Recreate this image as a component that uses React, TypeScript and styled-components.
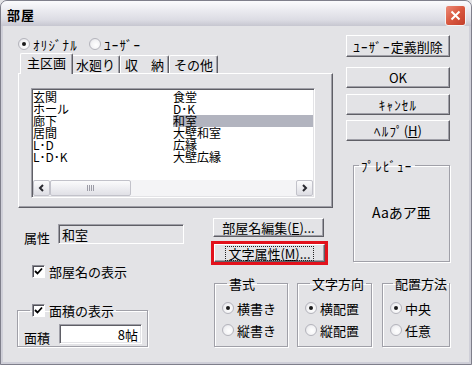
import styled, {createGlobalStyle} from "styled-components";

const GlobalStyle = createGlobalStyle`
    html, body {
        margin: 0;
        padding: 0;
        background: #e3e3e6;
    }
    body {
        font-family: "Noto Sans CJK JP", "DejaVu Sans", sans-serif;
        font-size: 13px;
        color: #000;
    }
`;

const FACE = "#e3e3e6";

const Window = styled.div`
    width: 472px;
    height: 365px;
    box-sizing: border-box;
    border: 1px solid #7f7f8b;
    border-radius: 7px 7px 0 0;
    background: #cfcfd8;
    display: flex;
    flex-direction: column;
    overflow: hidden;
`;

const TitleBar = styled.div`
    height: 25px;
    flex: none;
    display: flex;
    align-items: flex-start;
    justify-content: space-between;
    padding: 0 5px 0 6px;
    background: linear-gradient(#fbfbfd 0%, #ececf1 35%, #dcdce4 75%, #c6c6d0 100%);
`;

const Title = styled.span`
    font-weight: bold;
    font-size: 13px;
    line-height: 13px;
    margin-top: 7px;
    letter-spacing: 1px;
`;

const CloseButton = styled.div`
    width: 21px;
    height: 21px;
    margin-top: 4px;
    box-sizing: border-box;
    border: 1px solid #f4f4f4;
    border-radius: 3px;
    background: linear-gradient(135deg, #ec8a78 0%, #d9583f 50%, #c23e2a 100%);
    display: flex;
    align-items: center;
    justify-content: center;
`;

const Client = styled.div`
    flex: 1;
    margin: 0 2px 2px;
    background: ${FACE};
    box-sizing: border-box;
    padding: 9px 0 0 15px;
    display: grid;
    grid-template-columns: 192px 136px 104px;
    grid-template-rows: 173px 57px 82px;
`;

// half-width katakana run wider in the original UI font
const Kana = styled.span`
    letter-spacing: 1.2px;
`;

/* ---- radio / checkbox ---- */

const RadioLabel = styled.label`
    display: inline-flex;
    align-items: center;
    gap: 3px;
    height: 16px;
    line-height: 13px;
    white-space: nowrap;
`;

const RadioDot = styled.span<{ $checked?: boolean }>`
    width: 12px;
    height: 12px;
    box-sizing: border-box;
    border-radius: 50%;
    border: 1px solid #b4b4bc;
    background: radial-gradient(circle at 60% 60%, #ffffff 0%, #f2f2f4 55%, #d6d6dc 100%);
    display: flex;
    align-items: center;
    justify-content: center;

    &::after {
        content: "";
        width: 4px;
        height: 4px;
        border-radius: 50%;
        background: ${p => (p.$checked ? "#1a1a1a" : "transparent")};
    }
`;

const CheckBox = styled.span`
    width: 13px;
    height: 13px;
    box-sizing: border-box;
    border: 1px solid;
    border-color: #8c8c94 #ffffff #ffffff #8c8c94;
    box-shadow: inset 1px 1px 0 #505058;
    background: #fff;
    display: flex;
    align-items: center;
    justify-content: center;
`;

const CheckLabel = styled.label`
    display: inline-flex;
    align-items: center;
    gap: 4px;
    line-height: 13px;
    white-space: nowrap;
`;

const Check = () => (
    <CheckBox>
        <svg width="9" height="9" viewBox="0 0 9 9">
            <path d="M1 4 L3.5 6.5 L8 1.5" fill="none" stroke="#000" strokeWidth="1.8"/>
        </svg>
    </CheckBox>
);

const Radio = ({label, checked}: { label: React.ReactNode, checked?: boolean }) => (
    <RadioLabel>
        <RadioDot $checked={checked}/>
        <span>{label}</span>
    </RadioLabel>
);

/* ---- tabs & list ---- */

const TabArea = styled.div`
    grid-column: 1 / 3;
    grid-row: 1;
    display: flex;
    flex-direction: column;
`;

const ModeRow = styled.div`
    height: 18px;
    display: flex;
    align-items: center;
    gap: 11px;
`;

const TabStrip = styled.div`
    height: 20px;
    display: flex;
    align-items: flex-end;
    padding-left: 4px;
`;

const Tab = styled.div<{ $active?: boolean }>`
    position: relative;
    z-index: ${p => (p.$active ? 1 : 0)};
    height: ${p => (p.$active ? 21 : 18)}px;
    margin: 0 ${p => (p.$active ? -2 : 0)}px ${p => (p.$active ? -1 : 0)}px;
    padding: 0 ${p => (p.$active ? 6 : 4)}px;
    box-sizing: border-box;
    background: ${FACE};
    border: 1px solid;
    border-color: #ffffff #5f5f66 transparent #ffffff;
    border-bottom: none;
    border-radius: 2px 2px 0 0;
    box-shadow: inset -1px 0 0 #a0a0a8;
    font-size: 13px;
    line-height: ${p => (p.$active ? 18 : 17)}px;
    white-space: pre;
`;

const TabPanel = styled.div`
    width: 315px;
    height: 135px;
    box-sizing: border-box;
    border: 1px solid;
    border-color: #ffffff #5f5f66 #5f5f66 #ffffff;
    box-shadow: inset -1px -1px 0 #a0a0a8;
    padding: 14px 0 0 12px;
`;

const ListBox = styled.div`
    width: 284px;
    height: 110px;
    box-sizing: border-box;
    border: 1px solid;
    border-color: #a0a0a8 #ffffff #ffffff #a0a0a8;
    box-shadow: inset 1px 1px 0 #5f5f66, inset -1px -1px 0 ${FACE};
    background: #fff;
    padding: 1px;
    display: flex;
    flex-direction: column;
`;

const ListItems = styled.div`
    flex: 1;
    padding-top: 1px;
    display: grid;
    grid-auto-flow: column;
    grid-template-rows: repeat(6, 12px);
    grid-auto-columns: 140px;
`;

const ListItem = styled.div<{ $selected?: boolean }>`
    font-size: 12px;
    line-height: 12px;
    height: 12px;
    background: ${p => (p.$selected ? "#b2b4bf" : "transparent")};
    white-space: nowrap;
`;

const ScrollBar = styled.div`
    height: 16px;
    display: flex;
    background: #f4f4f6;
`;

const ScrollButton = styled.div`
    width: 17px;
    height: 16px;
    box-sizing: border-box;
    border: 1px solid #c2c2ca;
    border-radius: 2px;
    background: linear-gradient(#fbfbfc, #dedee4);
    display: flex;
    align-items: center;
    justify-content: center;
`;

const ScrollTrack = styled.div`
    flex: 1;
    display: flex;
`;

const ScrollThumb = styled.div`
    width: 81px;
    height: 16px;
    box-sizing: border-box;
    border: 1px solid #c2c2ca;
    border-radius: 2px;
    background: linear-gradient(#fbfbfc, #e0e0e6);
    display: flex;
    align-items: center;
    justify-content: center;
    gap: 1px;
`;

const Grip = styled.span`
    width: 1px;
    height: 6px;
    background: #9c9ca6;
`;

const Arrow = ({dir}: { dir: "left" | "right" }) => (
    <svg width="7" height="8" viewBox="0 0 7 8">
        <path
            d={dir === "left" ? "M5 1 L2 4 L5 7" : "M2 1 L5 4 L2 7"}
            fill="none"
            stroke="#2a2a30"
            strokeWidth="2"
        />
    </svg>
);

/* ---- buttons ---- */

const SideColumn = styled.div`
    grid-column: 3;
    grid-row: 1 / 3;
    display: flex;
    flex-direction: column;
`;

const Button = styled.button<{ $top?: number, $height?: number }>`
    display: block;
    width: 100%;
    height: ${p => p.$height ?? 21}px;
    margin: ${p => p.$top ?? 0}px 0 0;
    padding: 0;
    box-sizing: border-box;
    font-family: inherit;
    font-size: 13px;
    line-height: 13px;
    color: #000;
    background: ${FACE};
    border: 1px solid;
    border-color: #ffffff #5f5f66 #5f5f66 #ffffff;
    box-shadow: inset -1px -1px 0 #a0a0a8;
    text-align: center;
    white-space: nowrap;
`;

const FocusText = styled.span`
    display: inline-block;
    padding: 1px 3px;
    outline: 1px dotted #222;
    outline-offset: -1px;
`;

const GroupBox = styled.fieldset<{ $width: number, $height: number }>`
    width: ${p => p.$width}px;
    height: ${p => p.$height}px;
    box-sizing: border-box;
    margin: 0;
    padding: 0;
    min-inline-size: 0;
    border: 1px solid #a0a0a8;
    box-shadow: inset 1px 1px 0 #fff, 1px 1px 0 #fff;
`;

const Legend = styled.legend<{ $indent?: number }>`
    margin-left: ${p => p.$indent ?? 5}px;
    padding: 0 2px;
    line-height: 13px;
    font-size: 13px;
    white-space: nowrap;
    display: flex;
    align-items: center;
    gap: 4px;
`;

const PreviewBox = styled(GroupBox)`
    margin: 18px 0 0 7px;
`;

const PreviewText = styled.div`
    margin-top: 33px;
    text-align: center;
    font-size: 14px;
    line-height: 14px;
`;

/* ---- lower part ---- */

const AttrRow = styled.div`
    grid-column: 1;
    grid-row: 2;
    margin-top: 16px;
    padding-left: 6px;
    height: 20px;
    display: flex;
    align-items: center;
`;

const FieldLabel = styled.span<{ $width: number }>`
    width: ${p => p.$width}px;
    padding-top: 6px;
    line-height: 13px;
`;

const Field = styled.div<{ $width: number, $white?: boolean, $right?: boolean }>`
    width: ${p => p.$width}px;
    height: 20px;
    box-sizing: border-box;
    border: 1px solid;
    border-color: #a0a0a8 #ffffff #ffffff #a0a0a8;
    box-shadow: inset 1px 1px 0 #5f5f66, inset -1px -1px 0 ${FACE};
    background: ${p => (p.$white ? "#fff" : FACE)};
    padding: 0 3px 0 3px;
    display: flex;
    align-items: center;
    justify-content: ${p => (p.$right ? "flex-end" : "flex-start")};
    line-height: 13px;
`;

const EditColumn = styled.div`
    grid-column: 2;
    grid-row: 2;
    padding-left: 3px;
    display: flex;
    flex-direction: column;
    align-items: flex-start;
`;

const EditButton = styled(Button)`
    width: 111px;
`;

const Highlight = styled.div`
    width: 117px;
    height: 24px;
    box-sizing: border-box;
    margin: 4px 0 0 -2px;
    border: 3px solid #e2121c;
`;

const LeftBottom = styled.div`
    grid-column: 1;
    grid-row: 3;
    display: flex;
    flex-direction: column;
    align-items: flex-start;
`;

const NameCheckRow = styled.div`
    margin-left: 14px;
    height: 13px;
    display: flex;
`;

const AreaBox = styled(GroupBox)`
    margin: 26px 0 0 -1px;
`;

const AreaRow = styled.div`
    margin-top: 7px;
    padding-left: 6px;
    display: flex;
    align-items: center;
`;

const FormatRow = styled.div`
    grid-column: 2 / 4;
    grid-row: 3;
    margin-top: 12px;
    padding-left: 4px;
    display: flex;
    align-items: flex-start;
`;

const FormatBox = styled(GroupBox)<{ $gap?: number }>`
    margin-left: ${p => p.$gap ?? 0}px;
    padding: 10px 0 0 7px;
    display: flex;
    flex-direction: column;
    gap: 6px;
`;

const leftItems = ["玄関", "ホール", "廊下", "居間", "L･D", "L･D･K"];
const rightItems = ["食堂", "D･K", "和室", "大壁和室", "広縁", "大壁広縁"];

const groups = [
    {title: "書式", items: ["横書き", "縦書き"], width: 74, gap: 0, indent: 5},
    {title: "文字方向", items: ["横配置", "縦配置"], width: 75, gap: 9, indent: 5},
    {title: "配置方法", items: ["中央", "任意"], width: 68, gap: 10, indent: 3},
];

const App = () => (
    <>
        <GlobalStyle/>
        <Window>
            <TitleBar>
                <Title>部屋</Title>
                <CloseButton>
                    <svg width="11" height="11" viewBox="0 0 11 11">
                        <path d="M1.5 1.5 L9.5 9.5 M9.5 1.5 L1.5 9.5" stroke="#fff" strokeWidth="2"/>
                    </svg>
                </CloseButton>
            </TitleBar>
            <Client>
                <TabArea>
                    <ModeRow>
                        <Radio label={<Kana>ｵﾘｼﾞﾅﾙ</Kana>} checked/>
                        <Radio label={<Kana>ﾕｰｻﾞｰ</Kana>}/>
                    </ModeRow>
                    <TabStrip>
                        <Tab $active>主区画</Tab>
                        <Tab>水廻り</Tab>
                        <Tab>収　納</Tab>
                        <Tab>その他</Tab>
                    </TabStrip>
                    <TabPanel>
                        <ListBox>
                            <ListItems>
                                {leftItems.map(item => <ListItem key={item}>{item}</ListItem>)}
                                {rightItems.map(item => (
                                    <ListItem key={item} $selected={item === "和室"}>{item}</ListItem>
                                ))}
                            </ListItems>
                            <ScrollBar>
                                <ScrollButton><Arrow dir="left"/></ScrollButton>
                                <ScrollTrack>
                                    <ScrollThumb>
                                        <Grip/><Grip/><Grip/><Grip/>
                                    </ScrollThumb>
                                </ScrollTrack>
                                <ScrollButton><Arrow dir="right"/></ScrollButton>
                            </ScrollBar>
                        </ListBox>
                    </TabPanel>
                </TabArea>

                <SideColumn>
                    <Button $height={22}><Kana>ﾕｰｻﾞｰ</Kana>定義削除</Button>
                    <Button $top={10}>OK</Button>
                    <Button $top={6}><Kana>ｷｬﾝｾﾙ</Kana></Button>
                    <Button $top={5}><Kana>ﾍﾙﾌﾟ</Kana>(<u>H</u>)</Button>
                    <PreviewBox $width={97} $height={103}>
                        <Legend><Kana>ﾌﾟﾚﾋﾞｭｰ</Kana></Legend>
                        <PreviewText>Aaあア亜</PreviewText>
                    </PreviewBox>
                </SideColumn>

                <AttrRow>
                    <FieldLabel $width={34}>属性</FieldLabel>
                    <Field $width={126}>和室</Field>
                </AttrRow>

                <EditColumn>
                    <EditButton $top={10} $height={19}>部屋名編集(<u>E</u>)...</EditButton>
                    <Highlight>
                        <Button $height={18}>
                            <FocusText>文字属性(<u>M</u>)...</FocusText>
                        </Button>
                    </Highlight>
                </EditColumn>

                <LeftBottom>
                    <NameCheckRow>
                        <CheckLabel><Check/>部屋名の表示</CheckLabel>
                    </NameCheckRow>
                    <AreaBox $width={131} $height={44}>
                        <Legend $indent={12}>
                            <Check/>面積の表示
                        </Legend>
                        <AreaRow>
                            <FieldLabel $width={35}>面積</FieldLabel>
                            <Field $width={83} $white $right>8帖</Field>
                        </AreaRow>
                    </AreaBox>
                </LeftBottom>

                <FormatRow>
                    {groups.map(group => (
                        <FormatBox key={group.title} $width={group.width} $height={70} $gap={group.gap}>
                            <Legend $indent={group.indent}>{group.title}</Legend>
                            <Radio label={group.items[0]} checked/>
                            <Radio label={group.items[1]}/>
                        </FormatBox>
                    ))}
                </FormatRow>
            </Client>
        </Window>
    </>
);

export default App;
